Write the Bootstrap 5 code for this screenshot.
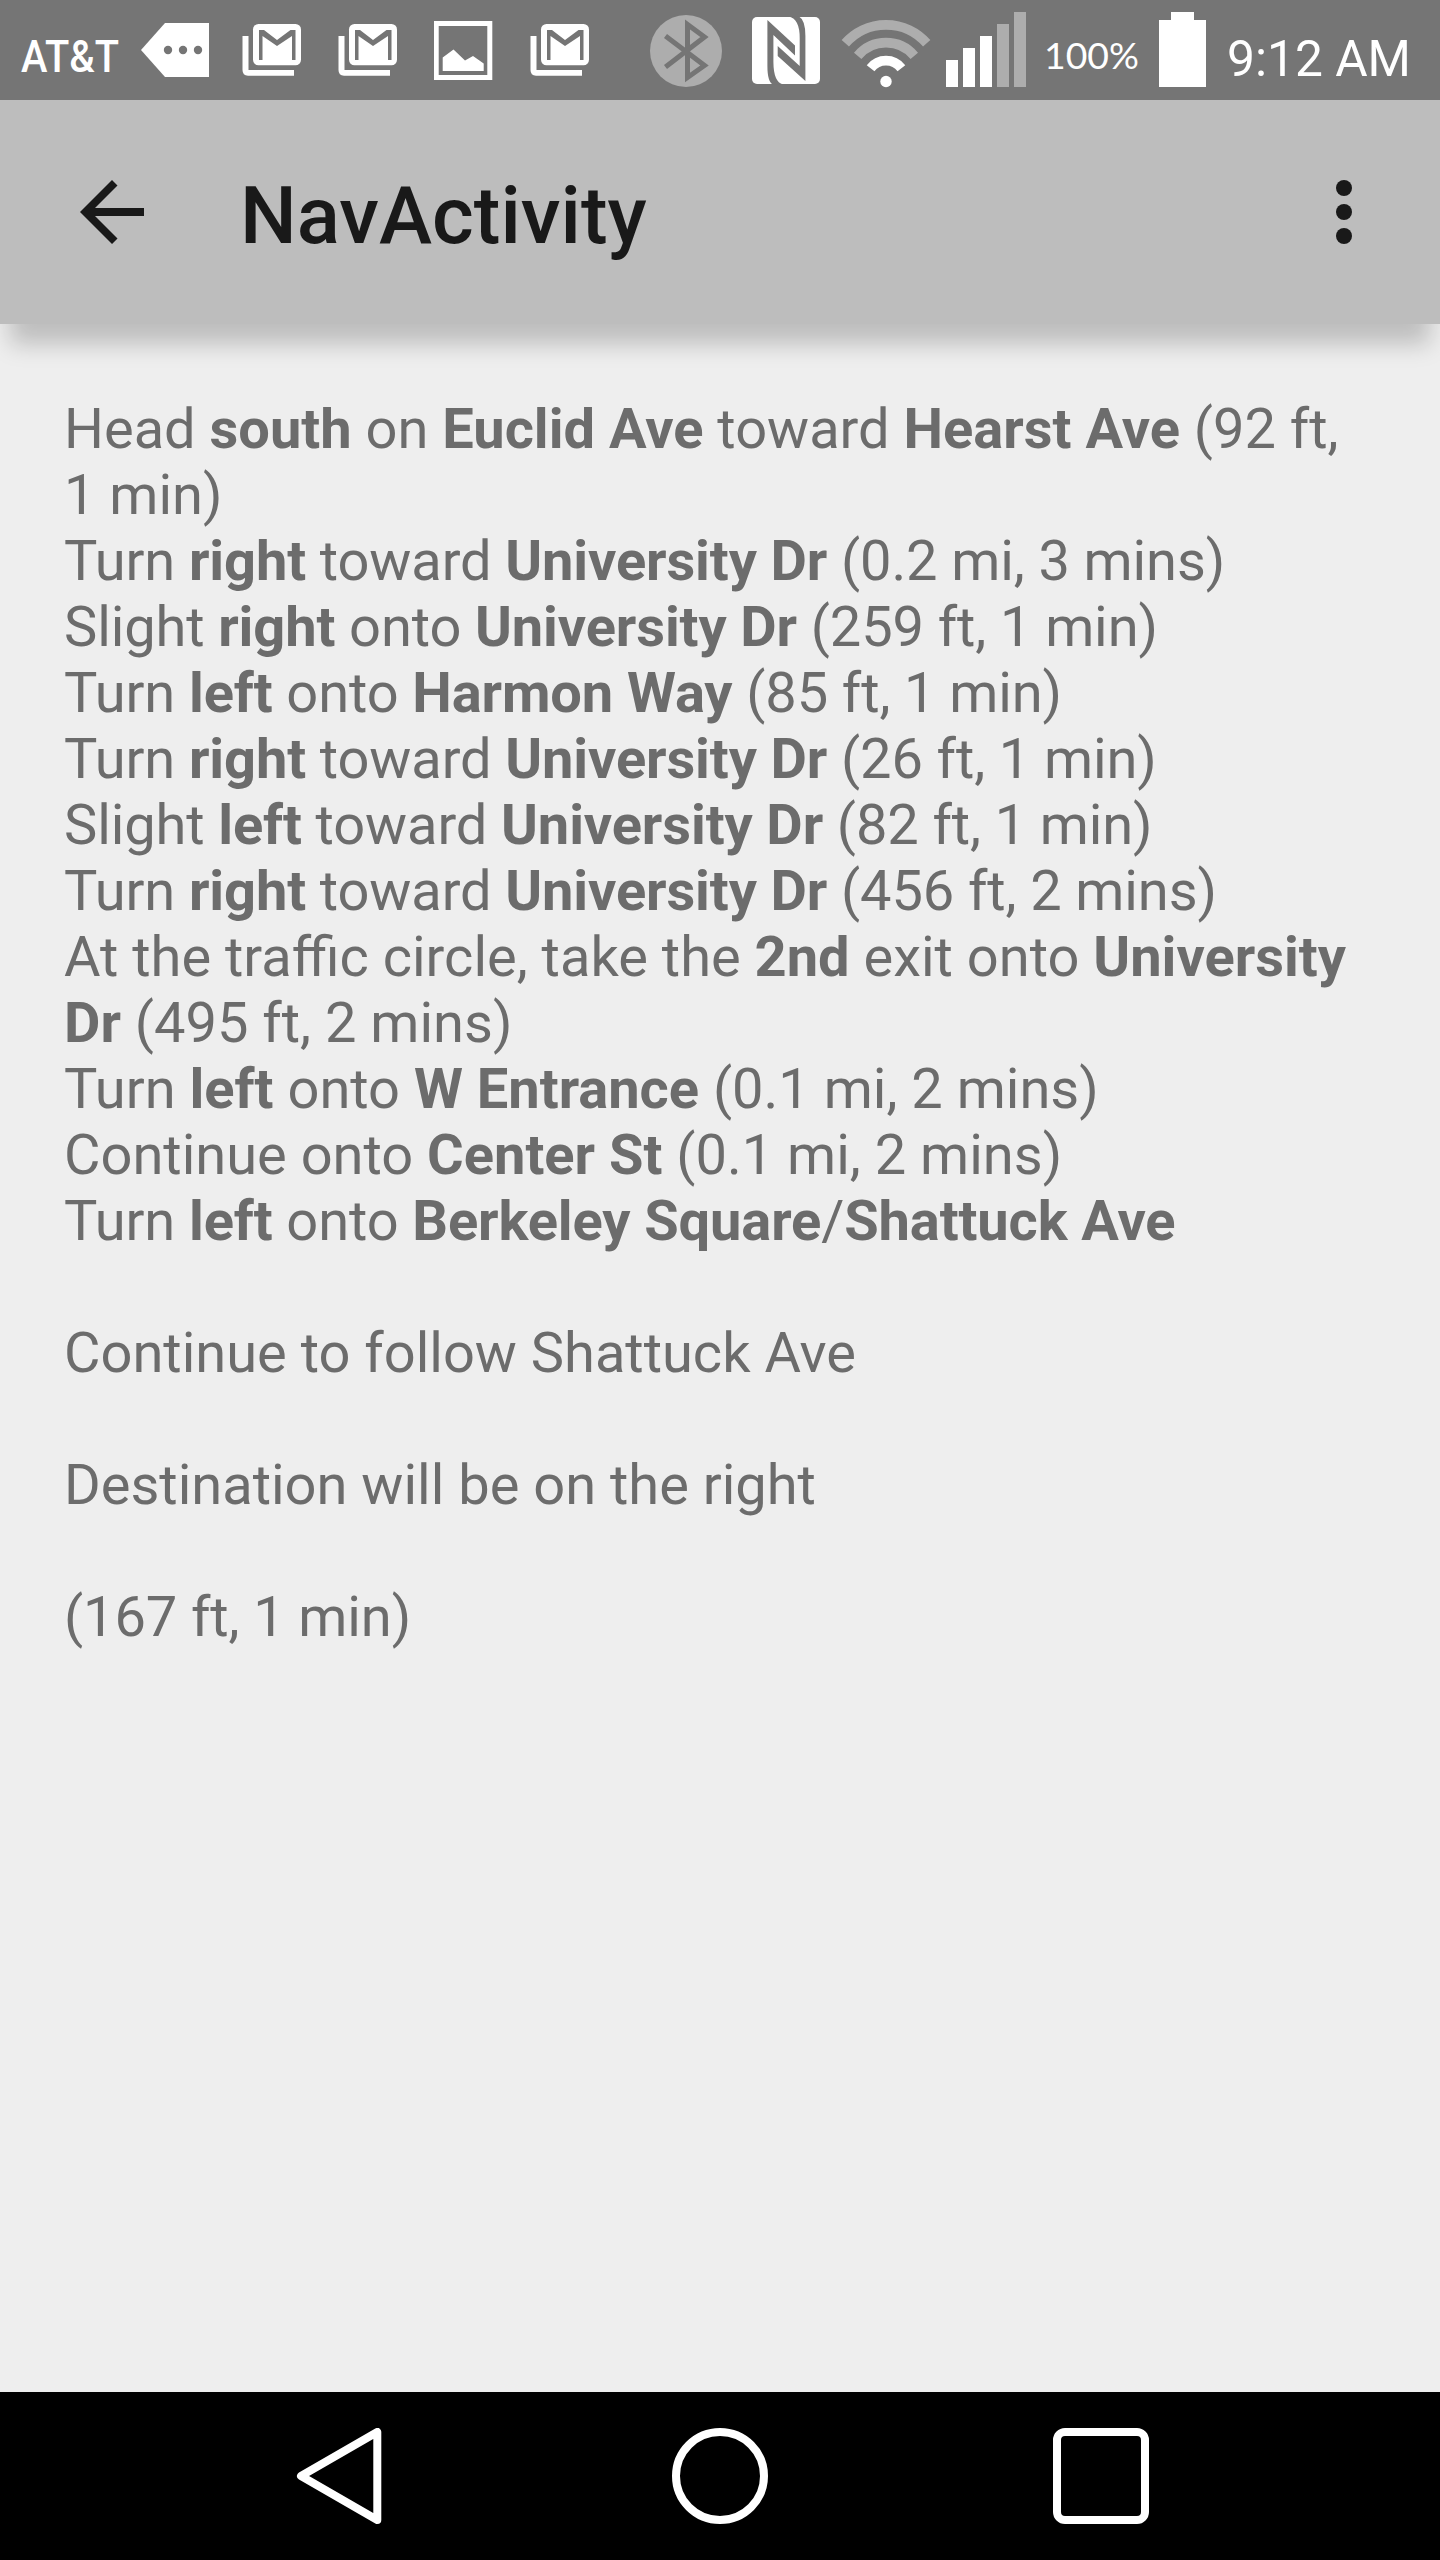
<!DOCTYPE html>
<html lang="en">
<head>
<meta charset="utf-8">
<meta name="viewport" content="width=device-width, initial-scale=1">
<title>NavActivity</title>
<link href="https://cdn.jsdelivr.net/npm/bootstrap@5.3.0/dist/css/bootstrap.min.css" rel="stylesheet">
<style>
  body { font-family: Roboto, "Liberation Sans", sans-serif; background: #eee; }
  .screen { width: 1440px; height: 2560px; overflow: hidden; }
  .status-bar { height: 100px; background: #757575; }
  .status-bar svg { display: block; height: 100px; fill: #fff; }
  .status-bar .cut { fill: #757575; }
  .status-bar .dim { fill: #adadad; }
  .app-bar { height: 224px; padding: 0 80px; background: #bdbdbd; color: #191919; box-shadow: 0 30px 22px -10px rgba(0,0,0,.205); z-index: 1; }
  .app-title { font-size: 80px; font-weight: 500; line-height: 94px; margin-left: 96px; padding-top: 7px; }
  .directions { padding: 72px 64px 0; font-size: 56px; line-height: 66px; color: #6c6c6c; }
  .directions p { margin: 0; }
  .directions p.spaced { margin-top: 66px; }
  .directions p.snug { letter-spacing: -.11px; }
  .directions b { font-weight: 700; }
  .nav-keys { height: 168px; background: #000; }
  .nav-keys button { width: 381px; }
  .nav-keys svg { fill: none; stroke: #fff; stroke-width: 8; }
</style>
</head>
<body>
<div class="screen d-flex flex-column">

  <header class="status-bar d-flex justify-content-between flex-shrink-0">
    <div class="d-flex">
      <svg width="130" viewBox="0 0 130 100"><text x="21" y="72" font-size="44" font-weight="500" textLength="98" lengthAdjust="spacingAndGlyphs">AT&amp;T</text></svg>
      <svg width="94" viewBox="130 0 94 100"><path d="M141 50 165 23H209V77H165Z"/><g class="cut"><circle cx="168" cy="50" r="4.2"/><circle cx="183" cy="50" r="4.2"/><circle cx="198" cy="50" r="4.2"/></g></svg>
      <svg width="96" viewBox="224 0 96 100">
        <g id="mail">
          <path d="M242.500 36H248.500V70H294V75.700H248Q242.500 75.700 242.500 70Z"/>
          <rect x="253" y="24" width="48" height="41.300" rx="5.500"/>
          <path class="cut" d="M259 30H264L277 40 290.500 30H295.500V60H292V36L277 46 262.500 36V60H259Z"/>
        </g>
      </svg>
      <svg width="96" viewBox="224 0 96 100"><use href="#mail"/></svg>
      <svg width="96" viewBox="416 0 96 100"><path fill-rule="evenodd" d="M434 21H492.300V80H434ZM438.700 26V75H487.300V26Z"/><path d="M442.700 57.500 453.500 49.500 465 60.500 473 56 483.700 63.500V71H442.700Z"/></svg>
      <svg width="96" viewBox="224 0 96 100"><use href="#mail"/></svg>
    </div>
    <div class="d-flex">
      <svg width="96" viewBox="640 0 96 100"><circle class="dim" cx="686" cy="51" r="36"/><path d="M665.500 36 704.500 65.500 687.500 77.500V24.500L704.500 37 665.500 67" fill="none" stroke="#757575" stroke-width="5"/></svg>
      <svg width="96" viewBox="736 0 96 100"><rect x="752" y="17" width="68" height="67" rx="5"/><path class="cut" d="M767.400 20 795 45.500V55.500L773.400 35V62Q773.500 82 783 84.500H773Q767.400 82 767.400 66ZM777.700 46 799.700 66V38Q799.700 19 789 16.500H799Q805.400 20 805.400 36V81L777.700 56Z"/></svg>
      <svg width="104" viewBox="832 0 104 100"><g fill="none" stroke-width="9.700"><path stroke="#adadad" d="M845.300 43.300A54 54 0 0 1 926.700 43.300M857.700 55.800A37 37 0 0 1 914.300 55.800"/><path stroke="#fff" d="M870.600 68.200A19.400 19.400 0 0 1 901.400 68.200"/></g><circle cx="886" cy="81.500" r="5.700"/></svg>
      <svg width="98" viewBox="936 0 98 100"><path d="M946 60h12v27h-12zM963 48h12v39h-12zM980 36h12v51h-12z"/><path class="dim" d="M997 24h12v63h-12zM1014 12h12v75h-12z"/></svg>
      <svg width="115" viewBox="1034 0 115 100"><text x="1044" y="69" font-family="Lato" font-size="36" textLength="95" lengthAdjust="spacingAndGlyphs">100%</text></svg>
      <svg width="67" viewBox="1149 0 67 100"><path d="M1171 12h23v8h12v67h-47V20h12z"/></svg>
      <svg width="224" viewBox="1216 0 224 100"><text x="1227" y="76" font-size="50" textLength="184" lengthAdjust="spacingAndGlyphs">9:12 AM</text></svg>
    </div>
  </header>

  <nav class="app-bar d-flex align-items-center flex-shrink-0 position-relative">
    <svg width="64" height="64" viewBox="0 0 64 64" fill="currentColor"><path d="M64 28H15L37.500 5.500 32 0 0 32 32 64 37.500 58.500 15 36H64Z"/></svg>
    <h1 class="app-title mb-0">NavActivity</h1>
    <svg class="ms-auto" width="32" height="64" viewBox="0 0 32 64" fill="currentColor"><circle cx="16" cy="8" r="8"/><circle cx="16" cy="32" r="8"/><circle cx="16" cy="56" r="8"/></svg>
  </nav>

  <main class="directions flex-grow-1">
    <p>Head <b>south</b> on <b>Euclid Ave</b> toward <b>Hearst Ave</b> (92 ft, 1 min)</p>
    <p class="snug">Turn <b>right</b> toward <b>University Dr</b> (0.2 mi, 3 mins)</p>
    <p class="snug">Slight <b>right</b> onto <b>University Dr</b> (259 ft, 1 min)</p>
    <p class="snug">Turn <b>left</b> onto <b>Harmon Way</b> (85 ft, 1 min)</p>
    <p class="snug">Turn <b>right</b> toward <b>University Dr</b> (26 ft, 1 min)</p>
    <p class="snug">Slight <b>left</b> toward <b>University Dr</b> (82 ft, 1 min)</p>
    <p class="snug">Turn <b>right</b> toward <b>University Dr</b> (456 ft, 2 mins)</p>
    <p>At the traffic circle, take the <b>2nd</b> exit onto <b>University Dr</b> (495 ft, 2 mins)</p>
    <p>Turn <b>left</b> onto <b>W Entrance</b> (0.1 mi, 2 mins)</p>
    <p>Continue onto <b>Center St</b> (0.1 mi, 2 mins)</p>
    <p class="snug">Turn <b>left</b> onto <b>Berkeley Square</b>/<b>Shattuck Ave</b></p>
    <p class="spaced">Continue to follow Shattuck Ave</p>
    <p class="spaced">Destination will be on the right</p>
    <p class="spaced snug">(167 ft, 1 min)</p>
  </main>

  <footer class="nav-keys d-flex justify-content-center align-items-center flex-shrink-0">
    <button class="btn border-0 p-0 rounded-0" aria-label="Back"><svg width="96" height="96" viewBox="0 0 96 96"><path stroke-linejoin="round" d="M10 48 86.300 4V92Z"/></svg></button>
    <button class="btn border-0 p-0 rounded-0" aria-label="Home"><svg width="96" height="96" viewBox="0 0 96 96"><circle cx="48" cy="48" r="44"/></svg></button>
    <button class="btn border-0 p-0 rounded-0" aria-label="Recent apps"><svg width="96" height="96" viewBox="0 0 96 96"><rect x="4" y="4" width="88" height="88" rx="8"/></svg></button>
  </footer>
</div>
<script src="https://cdn.jsdelivr.net/npm/bootstrap@5.3.0/dist/js/bootstrap.bundle.min.js"></script>
</body>
</html>
